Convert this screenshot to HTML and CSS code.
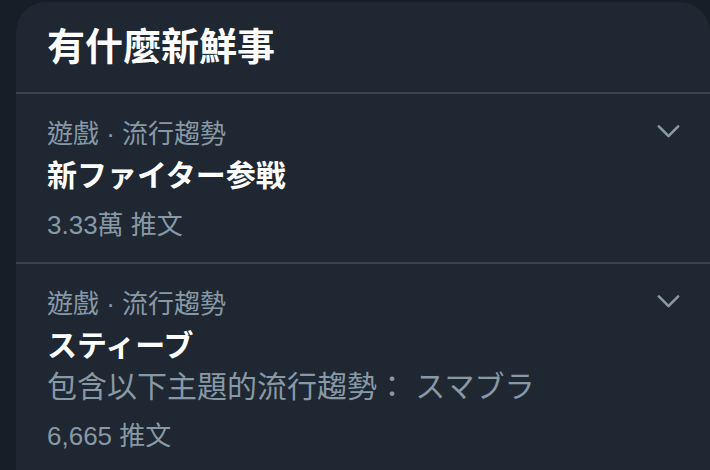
FILE: index.html
```html
<!DOCTYPE html>
<html lang="zh-Hant">
<head>
  <meta charset="UTF-8">
  <meta name="viewport" content="width=device-width, initial-scale=1.0">
  <title>有什麼新鮮事</title>
  <link rel="stylesheet" href="styles.css">
</head>
<body>
  <div class="page">
    <div class="card">
      <div class="card_header"><h2>有什麼新鮮事</h2></div>

      <div class="trend">
        <div class="trend_body">
          <div class="trend_meta">遊戲 · 流行趨勢</div>
          <div class="trend_title">新ファイター参戦</div>
          <div class="trend_count">3.33萬 推文</div>
        </div>
        <svg class="caret" viewBox="0 0 24 24"><path d="M20.207 8.147c-.39-.39-1.023-.39-1.414 0L12 14.94 5.207 8.147c-.39-.39-1.023-.39-1.414 0-.39.39-.39 1.023 0 1.414l7.5 7.5c.195.196.45.294.707.294s.512-.098.707-.293l7.5-7.5c.39-.39.39-1.022 0-1.413z"/></svg>
      </div>

      <div class="trend">
        <div class="trend_body">
          <div class="trend_meta">遊戲 · 流行趨勢</div>
          <div class="trend_title">スティーブ</div>
          <div class="trend_desc">包含以下主題的流行趨勢： スマブラ</div>
          <div class="trend_count">6,665 推文</div>
        </div>
        <svg class="caret" viewBox="0 0 24 24"><path d="M20.207 8.147c-.39-.39-1.023-.39-1.414 0L12 14.94 5.207 8.147c-.39-.39-1.023-.39-1.414 0-.39.39-.39 1.023 0 1.414l7.5 7.5c.195.196.45.294.707.294s.512-.098.707-.293l7.5-7.5c.39-.39.39-1.022 0-1.413z"/></svg>
      </div>
    </div>
  </div>
</body>
</html>
```

FILE: styles.css
```css
* {
  box-sizing: border-box;
  font-family: "Liberation Sans", "Noto Sans CJK TC", sans-serif;
}

body {
  margin: 0;
  background: #161e27;
  overflow: hidden;
}

.page {
  padding: 2px 0 0 16px;
  width: 710px;
  height: 470px;
}

.card {
  width: 694px;
  background: #1e2732;
  border-radius: 30px 30px 0 0;
}

.card_header {
  padding: 20px 31px;
  border-bottom: 2px solid #38444d;
}

.card_header h2 {
  margin: 0;
  font-size: 38px;
  line-height: 50px;
  font-weight: 700;
  color: #ffffff;
}

.trend {
  display: flex;
  flex-direction: row;
  justify-content: space-between;
  align-items: flex-start;
  padding: 20px 26px 17px 31px;
  border-bottom: 2px solid #38444d;
}

.trend_meta,
.trend_count,
.trend_desc {
  color: #8899a6;
  font-size: 26px;
  line-height: 40px;
}

.trend_title {
  margin-top: 2px;
  color: #ffffff;
  font-size: 30px;
  font-weight: 700;
  line-height: 40px;
}

.trend_desc {
  font-size: 30px;
  margin-top: 1px;
}

.trend_count {
  margin-top: 9px;
}

.caret {
  width: 31px;
  height: 31px;
  margin-top: 1px;
  fill: #8899a6;
}
```
